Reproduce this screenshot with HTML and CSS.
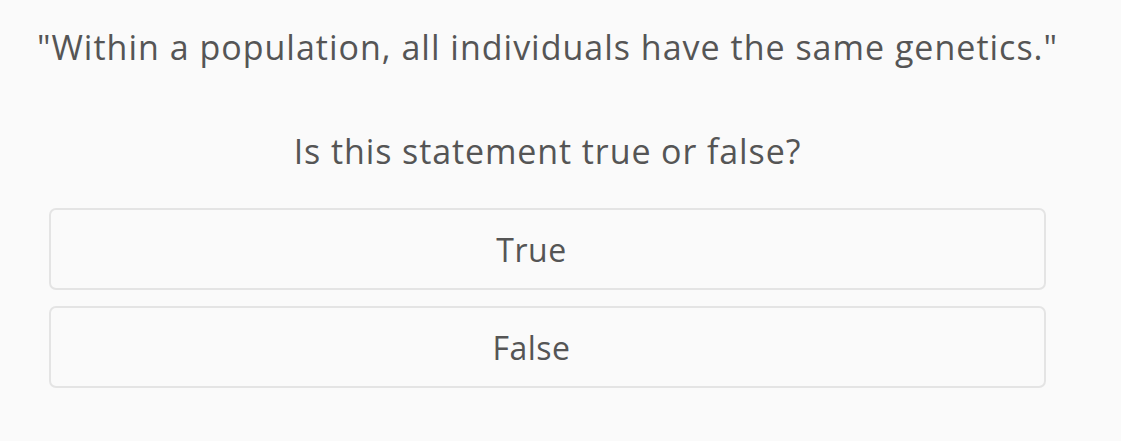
FILE: index.html
```html
<!DOCTYPE html>
<html>
<head>
<meta charset="utf-8">
<link rel="stylesheet" href="styles.css">
</head>
<body>
<div class="quiz">
  <p class="statement">"Within a population, all individuals have the same genetics."</p>
  <p class="question">Is this statement true or false?</p>
  <div class="options">
    <div class="option">True</div>
    <div class="option">False</div>
  </div>
</div>
</body>
</html>
```
FILE: styles.css
```css
html, body {
  margin: 0;
  padding: 0;
  background: #fafafa;
}
body {
  font-family: "Open Sans", Lato, sans-serif;
  color: #555555;
}
.quiz {
  width: 1095px;
  padding-top: 23px;
}
.statement {
  margin: 0;
  text-align: center;
  font-size: 34px;
  line-height: 48px;
  letter-spacing: 1px;
  white-space: nowrap;
}
.question {
  margin: 56px 0 0;
  text-align: center;
  font-size: 34px;
  line-height: 48px;
  letter-spacing: 0.9px;
}
.options {
  margin: 33px 49px 0;
  display: flex;
  flex-direction: column;
  gap: 16px;
}
.option {
  height: 78px;
  padding-right: 32px;
  border: 2px solid #e4e4e4;
  border-radius: 7px;
  display: flex;
  align-items: center;
  justify-content: center;
  font-size: 32px;
  letter-spacing: 0.5px;
}
```
